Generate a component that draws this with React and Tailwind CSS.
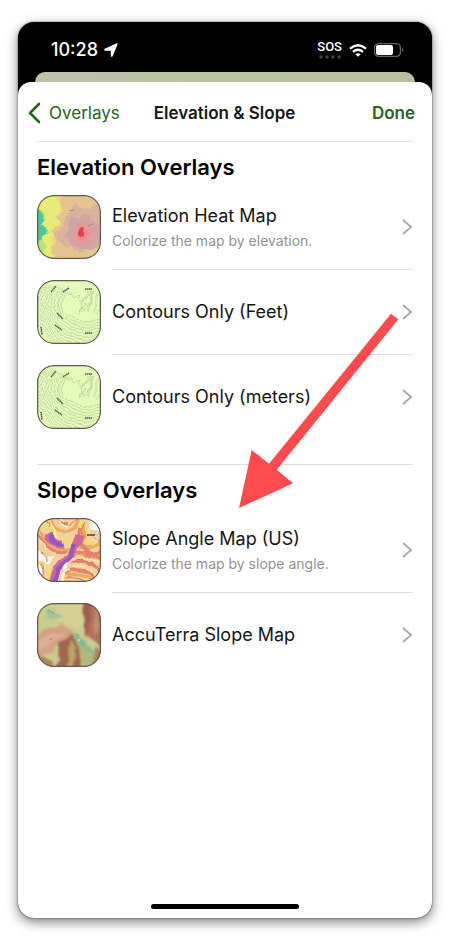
import React from "react";

function Thumb({ children }) {
  return (
    <span className="relative block size-16 shrink-0 overflow-hidden rounded-[17px]">
      <svg viewBox="0 0 64 64" className="block size-full" aria-hidden="true">
        {children}
        <rect x="0.6" y="0.6" width="62.8" height="62.8" rx="16.4" fill="none" stroke="#5c5d55" strokeWidth="1.3" />
      </svg>
    </span>
  );
}

function HeatThumb() {
  return (
    <Thumb>
      <defs>
        <filter id="heat-edge" x="-20%" y="-20%" width="140%" height="140%">
          <feTurbulence type="fractalNoise" baseFrequency="0.13" numOctaves="3" seed="4" />
          <feDisplacementMap in="SourceGraphic" scale="8" xChannelSelector="R" yChannelSelector="G" />
          <feGaussianBlur stdDeviation="0.4" />
        </filter>
      </defs>
      <rect width="64" height="64" fill="#e6c490" />
      <g filter="url(#heat-edge)">
        <path d="M-6-6H29L23 8l4 8-8 7 5 7-9 6 4 9-6 7 7 8-3 14H-6Z" fill="#eed788" />
        <path d="M-6-6H19l-1 10 9 9-9 8 5 8-9 5 3 8-5 8 4 9-5 6 6 10H-6Z" fill="#e6ec74" />
        <path d="M-6 12 5 17l5 8-5 5 5 4-7 8 5 10-2 15H-6Z" fill="#b4e37c" />
        <path d="M-6 14 3 18l5 9-5 4 8 5-8 7-3 4-4 2Z" fill="#4ec79b" />
        <path d="M29 19 37 9l15 5 12-6v45l-12 2-9 4-8-6-11-3-6-10 8-7Z" fill="#dab39e" />
        <path d="m32 31 4-8 14-2 12 7 2 18-8 9-14-1-9-6-4-8Z" fill="#d2a5a4" />
        <path d="m37 37 3-9 8-2 7 8-1 11-8 5-9-5Z" fill="#e49a9c" />
        <path d="m40 37 4-7 6 4 2 7-5 5-6-3Z" fill="#f08788" />
      </g>
      <path d="m46 32-3 1-2 4 0 3 2 2 4-1 0-3-1-2 1-3Z" fill="#e4404b" />
      <path d="M32 16l5-1M51 31l5-2" stroke="#a9806a" strokeWidth="0.8" />
    </Thumb>
  );
}

const bends = Array.from({ length: 13 }, (_, i) => i);

function ContourThumb() {
  return (
    <Thumb>
      <defs>
        <filter id="contour-wave" x="-20%" y="-20%" width="140%" height="140%">
          <feTurbulence type="fractalNoise" baseFrequency="0.07" numOctaves="2" seed="3" />
          <feDisplacementMap in="SourceGraphic" scale="7" xChannelSelector="R" yChannelSelector="G" />
        </filter>
      </defs>
      <rect width="64" height="64" fill="#e3fab9" />
      <g fill="none" stroke="#a7b592" strokeWidth="0.5" filter="url(#contour-wave)">
        {bends.map((i) => (
          <path
            key={i}
            d={`M68 ${40 + i * 3}Q${50 - i} ${43 + i * 3} ${37 - i} ${38 + i * 3}Q${25 - i * 2} ${33 + i} ${24 - i * 3} 24Q${24 - i * 2} ${15 - i} ${38 - i * 3} ${12 - i}`}
          />
        ))}
        <path d="M34 13l3 6 7-4-2 7 4 3-4 6 9-6-5-3 8-7-1-7M52 12v6l-8 8 4 5 7-9V12M56 12v9l-6 12M60 12v12l-5 11M64 12v14l-5 10M48 28l-6 6" />
      </g>
      <path d="M0 0h8L0 9Z" fill="#a9ad92" />
      <path
        d="m14 12 5-6M26 12l6-4M48 9h7M20 33l6 6M18 45l7 5M4 47l1 8M48 53h7"
        stroke="#56614a"
        strokeWidth="1.6"
        strokeDasharray="1.5 0.4"
      />
    </Thumb>
  );
}

function SlopeAngleThumb() {
  return (
    <Thumb>
      <defs>
        <filter id="angle-edge" x="-20%" y="-20%" width="140%" height="140%">
          <feTurbulence type="fractalNoise" baseFrequency="0.07" numOctaves="2" seed="2" />
          <feDisplacementMap in="SourceGraphic" scale="6" xChannelSelector="R" yChannelSelector="G" />
          <feGaussianBlur stdDeviation="0.7" />
        </filter>
      </defs>
      <rect width="64" height="64" fill="#f2d29a" />
      <g filter="url(#angle-edge)" fill="none">
        <path d="M-3 31q8 9 17 9L4 58-5 52M52-6l4 16 14 6V-6ZM24-3q-3 9 6 13M31 46l-7 16" fill="#fbf5ee" stroke="#fbf5ee" strokeWidth="3" />
        <path d="M2 3q12 2 15 15t19 4 3-27M-3 46q10-2 14 6t-5 14M49 4q-6 20 5 22t17 6" stroke="#f0dc74" strokeWidth="4" />
        <path d="M15-2q-1 17 13 16t15-18M-4 10q10 1 13 12t22 9 15-25M42 29q11 3 26-5M35 38q14-5 31 5M30 58q18-4 30 8" stroke="#f0a763" strokeWidth="3" />
        <path d="M20-3q2 8 11 9M-3 16q8 0 12 10t20 7M34 46q17-8 31 8M28 55q22-7 34 9M43 9q-4 18 8 24t14-3M38 34q14-1 28 8" stroke="#e6806f" strokeWidth="3" />
        <path d="M12 14q1 13 14 12M43 17Q37 35 28 42T15 66" stroke="#d0669a" strokeWidth="7" />
        <path d="m14 15 3 9 10 4M38 26l-6 14-11 13-4 12" stroke="#9259c6" strokeWidth="4" />
        <path d="M4 3q9 0 8 7M48 3q-6 9-2 18M38 42q12-3 22 6M28 60q12-2 22 5M3 35q8 2 7 9M24 4q8 9 18-4M52 12q0 12 14 12M4 46q6 8 0 14" stroke="#cc7268" strokeWidth="1" />
        <path d="M22 0q2 10 10 8M53 9q-4 12 8 15M36 50q16-4 24 10M24 57q4-5 10-4M2 22q6 2 8 9M12 6q6 4 8 14M45 39q10 0 20 8" stroke="#f8eba4" strokeWidth="1.5" />
      </g>
      <path d="M50 17h8" stroke="#4f3b42" strokeWidth="1.4" />
      <circle cx="60" cy="15" r="1.8" fill="#dce5fb" stroke="#a8b4d6" strokeWidth="0.6" />
    </Thumb>
  );
}

function AccuTerraThumb() {
  return (
    <Thumb>
      <defs>
        <filter id="terra-edge" x="-20%" y="-20%" width="140%" height="140%">
          <feTurbulence type="fractalNoise" baseFrequency="0.08" numOctaves="3" seed="2" />
          <feDisplacementMap in="SourceGraphic" scale="6" xChannelSelector="R" yChannelSelector="G" />
          <feGaussianBlur stdDeviation="1" />
        </filter>
      </defs>
      <rect width="64" height="64" fill="#c9cc8c" />
      <g filter="url(#terra-edge)">
        <path d="M20-6 48-6 43 25 29 21 18 16Z" fill="#d5d196" />
        <path d="M-6 36 11 25l16-3 11 7-16 11-8 10-22 4Z" fill="#d3a283" />
        <path d="m0 39 14-9 14 0-13 9-6 8H-3Z" fill="#deb094" />
        <path d="M46-8h26v58L57 38l-10-7 1-12Z" fill="#b1715d" />
        <path d="m46-6 8 2-2 30-5 6Z" fill="#a05d50" />
        <path d="m56-6 6 2v34l-4 2Z" fill="#c08d6a" />
        <path d="m22 40 13-9 7 13 3 28H18l3-18Z" fill="#a0664f" />
        <path d="m34 36 5 10-4 21h-5Z" fill="#b7a56a" />
        <path d="m-6 49 22 9-1 14H-6Z" fill="#b3815e" />
        <path d="m41 32 11 13 18 9v18l-24-1Z" fill="#b0b97a" />
        <path d="m36 30 7 2 10 12 8 10-12-8-9-9Z" fill="#82b996" />
        <path d="M9 6q7 7 19 6l-9 5-9-4Z" fill="#9fc39c" />
        <path d="m57 42 14 10v20H56Z" fill="#a88560" />
      </g>
      <path d="m11 7 7 4M39 30l3 3M12 37l4-2" stroke="#76987e" strokeWidth="0.8" />
      <circle cx="42" cy="37" r="1.2" fill="#c9d8cf" />
    </Thumb>
  );
}

const sections = [
  {
    title: "Elevation Overlays",
    items: [
      { name: "Elevation Heat Map", note: "Colorize the map by elevation.", Picture: HeatThumb },
      { name: "Contours Only (Feet)", Picture: ContourThumb },
      { name: "Contours Only (meters)", Picture: ContourThumb },
    ],
  },
  {
    title: "Slope Overlays",
    items: [
      { name: "Slope Angle Map (US)", note: "Colorize the map by slope angle.", Picture: SlopeAngleThumb },
      { name: "AccuTerra Slope Map", Picture: AccuTerraThumb },
    ],
  },
];

function Row({ name, note, Picture, last }) {
  return (
    <li>
      <button type="button" className="flex h-[85px] w-full items-stretch gap-[11px] text-left">
        <span className="flex items-center pb-0.5">
          <Picture />
        </span>
        <span
          className={`flex min-w-0 flex-1 items-center justify-between border-b ${last ? "border-transparent" : "border-[#dedede]"}`}
        >
          <span className="flex flex-col gap-[3px] whitespace-nowrap">
            <span className="text-[18px] leading-6 text-[#161616]">{name}</span>
            {note && <span className="text-[14px] leading-5 text-[#929292]">{note}</span>}
          </span>
          <svg viewBox="0 0 12 18" className="h-[18px] w-3 shrink-0" fill="none" stroke="#aaa" strokeWidth="2" aria-hidden="true">
            <path d="m2 2 8 7-8 7" />
          </svg>
        </span>
      </button>
    </li>
  );
}

function StatusBar() {
  return (
    <div className="flex h-[50px] items-center justify-between pt-1.5 pr-7 pl-[33px] text-white">
      <div className="flex items-center gap-1.5">
        <span className="text-[18px] leading-5 font-medium">10:28</span>
        <svg viewBox="0 0 14 14" className="size-3.5" fill="#fff" stroke="#fff" strokeWidth="1.4" strokeLinejoin="round" aria-hidden="true">
          <path d="M13 1 8 13 7.500 13V7H1V6.500Z" />
        </svg>
      </div>
      <div className="flex items-center gap-[7px]">
        <div className="flex flex-col items-center gap-0.5">
          <span className="font-['Roboto',sans-serif] text-[13px] leading-3 font-medium">SOS</span>
          <svg viewBox="0 0 22 4" className="h-1 w-[22px]" fill="#444" aria-hidden="true">
            <circle cx="2" cy="2" r="1.7" />
            <circle cx="8" cy="2" r="1.7" />
            <circle cx="14" cy="2" r="1.7" />
            <circle cx="20" cy="2" r="1.7" />
          </svg>
        </div>
        <svg viewBox="0 0 18 13" className="h-[13px] w-[18px]" fill="none" stroke="#fff" strokeWidth="2.3" aria-hidden="true">
          <path d="M1 4.6q8-6.6 16 0M4 7.8q5-4 10 0" />
          <path d="M6.3 10.2q2.7-2 5.4 0L9 12.8Z" fill="#fff" stroke="none" />
        </svg>
        <svg viewBox="0 0 30 14" className="h-3.5 w-[30px]" aria-hidden="true">
          <rect x="0.6" y="0.6" width="25.8" height="12.8" rx="4" fill="none" stroke="#666" strokeWidth="1.2" />
          <rect x="2" y="2" width="17" height="10" rx="2" fill="#fff" />
          <path d="M28 5q3 2 0 4Z" fill="#666" />
        </svg>
      </div>
    </div>
  );
}

export default function App() {
  return (
    <div className="flex min-h-screen flex-col bg-white px-[18px] py-[22px] font-['Inter',sans-serif]">
      <main className="relative flex flex-1 flex-col rounded-2xl bg-black shadow-[0_4px_12px_rgba(0,0,0,0.5),0_0_2px_rgba(0,0,0,0.6)]">
        <StatusBar />
        <div className="mx-[17px] h-2.5 rounded-t-[10px] bg-linear-to-r from-[#bfc2a8] via-[#b8c1a0] to-[#b9bd9f]" />
        <div className="flex flex-1 flex-col rounded-t-[13px] rounded-b-2xl bg-white">
          <header className="grid h-[59px] grid-cols-[1fr_auto_1fr] items-center pt-0.5 pr-[17px] pl-[10px] whitespace-nowrap">
            <button type="button" className="flex items-center gap-2 justify-self-start text-[17px] leading-6 text-[#28641f]">
              <svg viewBox="0 0 13 22" className="h-[22px] w-[13px]" fill="none" stroke="currentColor" strokeWidth="2.6" strokeLinecap="round" strokeLinejoin="round" aria-hidden="true">
                <path d="M11 2 2 11l9 9" />
              </svg>
              Overlays
            </button>
            <h1 className="pl-1.5 text-[17px] leading-6 font-semibold text-[#161616]">Elevation &amp; Slope</h1>
            <button type="button" className="justify-self-end text-[17px] leading-6 font-semibold text-[#28641f]">
              Done
            </button>
          </header>
          <div className="flex flex-col gap-6 px-[19px]">
            {sections.map(({ title, items }) => (
              <section key={title} className="border-t border-[#dedede]">
                <h2 className="h-[43px] pt-[11px] text-[22px] leading-7 font-semibold text-black">{title}</h2>
                <ul>
                  {items.map((item, i) => (
                    <Row key={item.name} {...item} last={i === items.length - 1} />
                  ))}
                </ul>
              </section>
            ))}
          </div>
          <div className="mt-auto mb-[9px] h-[5px] w-[148px] self-center rounded-full bg-black" />
        </div>
        <svg viewBox="0 0 160 196" className="pointer-events-none absolute top-[291px] left-[221px] h-[196px] w-40" aria-hidden="true">
          <path d="M0 195 12.7 137 30 150.7 152 .7l7.3 5.6L37.7 156.7 54 170.3Z" fill="#ff4b4d" />
        </svg>
      </main>
    </div>
  );
}
